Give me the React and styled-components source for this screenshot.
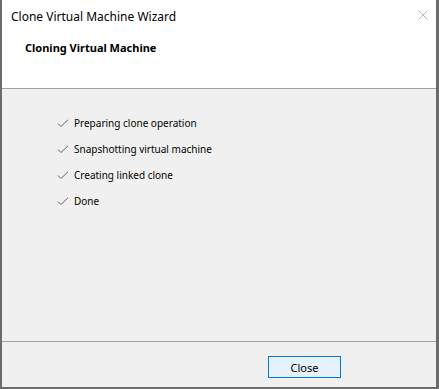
import React from 'react';
import styled, { createGlobalStyle } from 'styled-components';

const GlobalStyle = createGlobalStyle`
  html, body {
    margin: 0;
    padding: 0;
    background: #6b6b6b;
    font-family: "Noto Sans", "Open Sans", sans-serif;
  }
`;

const Window = styled.div`
  margin-left: 2px;
  width: 434px;
  height: 387px;
  background: #f0f0f0;
  display: flex;
  flex-direction: column;
`;

const Header = styled.div`
  background: #fff;
  height: 89px;
  border-bottom: 1px solid #a0a0a0;
  box-sizing: border-box;
  display: flex;
  flex-direction: column;
`;

const TitleBar = styled.div`
  height: 32px;
  display: flex;
  align-items: center;
  justify-content: space-between;
  padding: 0 8px 0 9px;
  font-size: 12px;
  color: #000;
`;

const CloseX = styled.svg`
  width: 10px;
  height: 10px;
  margin-top: -2px;
`;

const Heading = styled.div`
  padding: 0 0 0 23px;
  margin-top: 8px;
  font-size: 11px;
  font-weight: bold;
  color: #000;
`;

const Body = styled.div`
  flex: 1;
  padding: 21px 0 0 55px;
  border-bottom: 1px solid #a0a0a0;
`;

const Item = styled.div`
  height: 26px;
  display: flex;
  align-items: center;
  gap: 5px;
  font-size: 10px;
  color: #000;
`;

const Footer = styled.div`
  height: 45px;
  display: flex;
  justify-content: flex-end;
  align-items: flex-start;
  padding: 14px 95px 0 0;
  box-sizing: border-box;
`;

const Button = styled.button`
  width: 73px;
  height: 22px;
  background: #e5f1fb;
  border: 1px solid #0078d7;
  font-family: inherit;
  font-size: 11px;
  color: #000;
  padding: 0;
`;

const Check = () => (
  <svg width="12" height="9" viewBox="0 0 12 9">
    <path d="M1 4.5 L4 7.5 L11 0.8" fill="none" stroke="#606060" strokeWidth="1" />
  </svg>
);

const steps = [
  'Preparing clone operation',
  'Snapshotting virtual machine',
  'Creating linked clone',
  'Done',
];

export default function App() {
  return (
    <>
      <GlobalStyle />
      <Window>
        <Header>
          <TitleBar>
            <span>Clone Virtual Machine Wizard</span>
            <CloseX viewBox="0 0 10 10">
              <path d="M0.5 0.5 L9.5 9.5 M9.5 0.5 L0.5 9.5" stroke="#b8b8b8" strokeWidth="1" />
            </CloseX>
          </TitleBar>
          <Heading>Cloning Virtual Machine</Heading>
        </Header>
        <Body>
          {steps.map((s) => (
            <Item key={s}>
              <Check />
              <span>{s}</span>
            </Item>
          ))}
        </Body>
        <Footer>
          <Button>Close</Button>
        </Footer>
      </Window>
    </>
  );
}
